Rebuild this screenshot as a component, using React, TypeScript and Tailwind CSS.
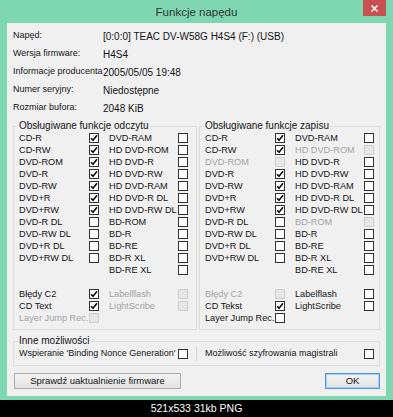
import React from 'react';

type State = 'on' | 'off' | 'dis';
type Cell = [string, State] | null;

// read capabilities: [left, right] per row, null row = spacer
const readRows: ([Cell, Cell] | null)[] = [
  [['CD-R', 'on'], ['DVD-RAM', 'off']],
  [['CD-RW', 'on'], ['HD DVD-ROM', 'off']],
  [['DVD-ROM', 'on'], ['HD DVD-R', 'off']],
  [['DVD-R', 'on'], ['HD DVD-RW', 'off']],
  [['DVD-RW', 'on'], ['HD DVD-RAM', 'off']],
  [['DVD+R', 'on'], ['HD DVD-R DL', 'off']],
  [['DVD+RW', 'on'], ['HD DVD-RW DL', 'off']],
  [['DVD-R DL', 'off'], ['BD-ROM', 'off']],
  [['DVD-RW DL', 'off'], ['BD-R', 'off']],
  [['DVD+R DL', 'off'], ['BD-RE', 'off']],
  [['DVD+RW DL', 'off'], ['BD-R XL', 'off']],
  [null, ['BD-RE XL', 'off']],
  null,
  [['Błędy C2', 'on'], ['Labelflash', 'dis']],
  [['CD Text', 'on'], ['LightScribe', 'dis']],
  [['Layer Jump Rec.', 'dis'], null],
];

const writeRows: ([Cell, Cell] | null)[] = [
  [['CD-R', 'on'], ['DVD-RAM', 'off']],
  [['CD-RW', 'on'], ['HD DVD-ROM', 'dis']],
  [['DVD-ROM', 'dis'], ['HD DVD-R', 'off']],
  [['DVD-R', 'on'], ['HD DVD-RW', 'off']],
  [['DVD-RW', 'on'], ['HD DVD-RAM', 'off']],
  [['DVD+R', 'on'], ['HD DVD-R DL', 'off']],
  [['DVD+RW', 'on'], ['HD DVD-RW DL', 'off']],
  [['DVD-R DL', 'off'], ['BD-ROM', 'dis']],
  [['DVD-RW DL', 'off'], ['BD-R', 'off']],
  [['DVD+R DL', 'off'], ['BD-RE', 'off']],
  [['DVD+RW DL', 'off'], ['BD-R XL', 'off']],
  [null, ['BD-RE XL', 'off']],
  null,
  [['Błędy C2', 'dis'], ['Labelflash', 'off']],
  [['CD Tekst', 'on'], ['LightScribe', 'off']],
  [['Layer Jump Rec.', 'off'], null],
];

const info = [
  ['Napęd:', '[0:0:0] TEAC DV-W58G H4S4 (F:) (USB)'],
  ['Wersja firmware:', 'H4S4'],
  ['Informacje producenta', '2005/05/05 19:48'],
  ['Numer seryjny:', 'Niedostępne'],
  ['Rozmiar bufora:', '2048 KiB'],
];

const Box = ({ state }: { state: State }) => {
  if (state === 'dis') {
    return <div className="w-[10px] h-[10px] border border-[#cfcfcf] bg-[#e6e6e6]" />;
  }
  return (
    <div className="w-[10px] h-[10px] border border-[#333] bg-white flex items-center justify-center">
      {state === 'on' && (
        <svg width="8" height="8" viewBox="0 0 8 8">
          <path d="M1 4.2 L3 6.3 L7 1.3" fill="none" stroke="#111" strokeWidth="1.6" />
        </svg>
      )}
    </div>
  );
};

const Pair = ({ cell }: { cell: Cell }) => {
  if (!cell) return <><div /><div /></>;
  const [label, state] = cell;
  return (
    <>
      <div className={`whitespace-nowrap ${state === 'dis' ? 'text-[#a3a3a3]' : ''}`}>{label}</div>
      <Box state={state} />
    </>
  );
};

const Group = ({ title, rows, className }: { title: string; rows: ([Cell, Cell] | null)[]; className: string }) => (
  <fieldset className={`border border-[#dcdcdc] pl-[5px] pb-[5px] ${className}`}>
    <legend className="leading-[12px] px-[1px] -ml-[1px] text-[10px]">{title}</legend>
    {rows.map((r, i) =>
      r ? (
        <div key={i} className="grid grid-cols-[70px_10px_10px_69px_10px] items-center h-[12px] leading-[12px] text-[9.2px]">
          <Pair cell={r[0]} />
          <div />
          <Pair cell={r[1]} />
        </div>
      ) : (
        <div key={i} className="h-[12px]" />
      )
    )}
  </fieldset>
);

export default function App() {
  return (
    <div
      className="w-[393px] h-[417px] bg-black flex flex-col text-[9.5px] text-[#141414]"
      style={{ fontFamily: '"Liberation Sans", Arial, sans-serif' }}
    >
      <div className="h-[400px] bg-[#7fd7b2] flex flex-col px-[7px] pb-[4px]">
        {/* title bar */}
        <div className="h-[23px] grid grid-cols-[1fr_auto_1fr] items-start">
          <div />
          <div className="text-[11.5px] text-[#333] mt-[5px] leading-[14px]">Funkcje napędu</div>
          <div className="flex justify-end">
            <div className="w-[23px] h-[16px] bg-[#c75050] flex items-center justify-center">
              <svg width="7" height="7" viewBox="0 0 7 7">
                <path d="M0.5 0.5 L6.5 6.5 M6.5 0.5 L0.5 6.5" stroke="#fff" strokeWidth="1.5" />
              </svg>
            </div>
          </div>
        </div>

        {/* client area */}
        <div className="flex-1 bg-[#f0f0f0] px-[6px] pt-[4px] pb-[7px] flex flex-col">
          {info.map(([k, v]) => (
            <div key={k} className="flex items-center h-[18px]">
              <div className="w-[90px] whitespace-nowrap text-[9px]">{k}</div>
              <div className="whitespace-nowrap text-[10px]">{v}</div>
            </div>
          ))}

          <div className="flex gap-[2px] mt-[3px]">
            <Group title="Obsługiwane funkcje odczytu" rows={readRows} className="w-[184px]" />
            <Group title="Obsługiwane funkcje zapisu" rows={writeRows} className="flex-1" />
          </div>

          <fieldset className="border border-[#dcdcdc] pl-[5px] pr-[5px] pb-[4px] mt-[5px]">
            <legend className="leading-[12px] px-[1px] -ml-[1px] text-[10px]">Inne możliwości</legend>
            <div className="grid grid-cols-[159px_10px_8px_1px_8px_1fr_10px] items-center h-[14px] text-[9px]">
              <div className="whitespace-nowrap">Wspieranie 'Binding Nonce Generation'</div>
              <Box state="off" />
              <div />
              <div className="h-[14px] bg-[#d4d4d4]" />
              <div />
              <div className="whitespace-nowrap">Możliwość szyfrowania magistrali</div>
              <Box state="off" />
            </div>
          </fieldset>

          <div className="flex justify-between items-center mt-[7px]">
            <button className="ml-[1px] w-[167px] h-[16px] border border-[#acacac] bg-gradient-to-b from-[#f3f3f3] to-[#e3e3e3] flex items-center justify-center">
              Sprawdź uaktualnienie firmware
            </button>
            <button className="w-[55px] h-[16px] border border-[#4a98e6] shadow-[inset_0_0_0_1px_#a9d0f5] bg-gradient-to-b from-[#f3f3f3] to-[#e3e3e3] flex items-center justify-center">
              OK
            </button>
          </div>
        </div>
      </div>

      <div className="flex-1 flex items-center justify-center text-white text-[10.5px]">521x533 31kb PNG</div>
    </div>
  );
}
